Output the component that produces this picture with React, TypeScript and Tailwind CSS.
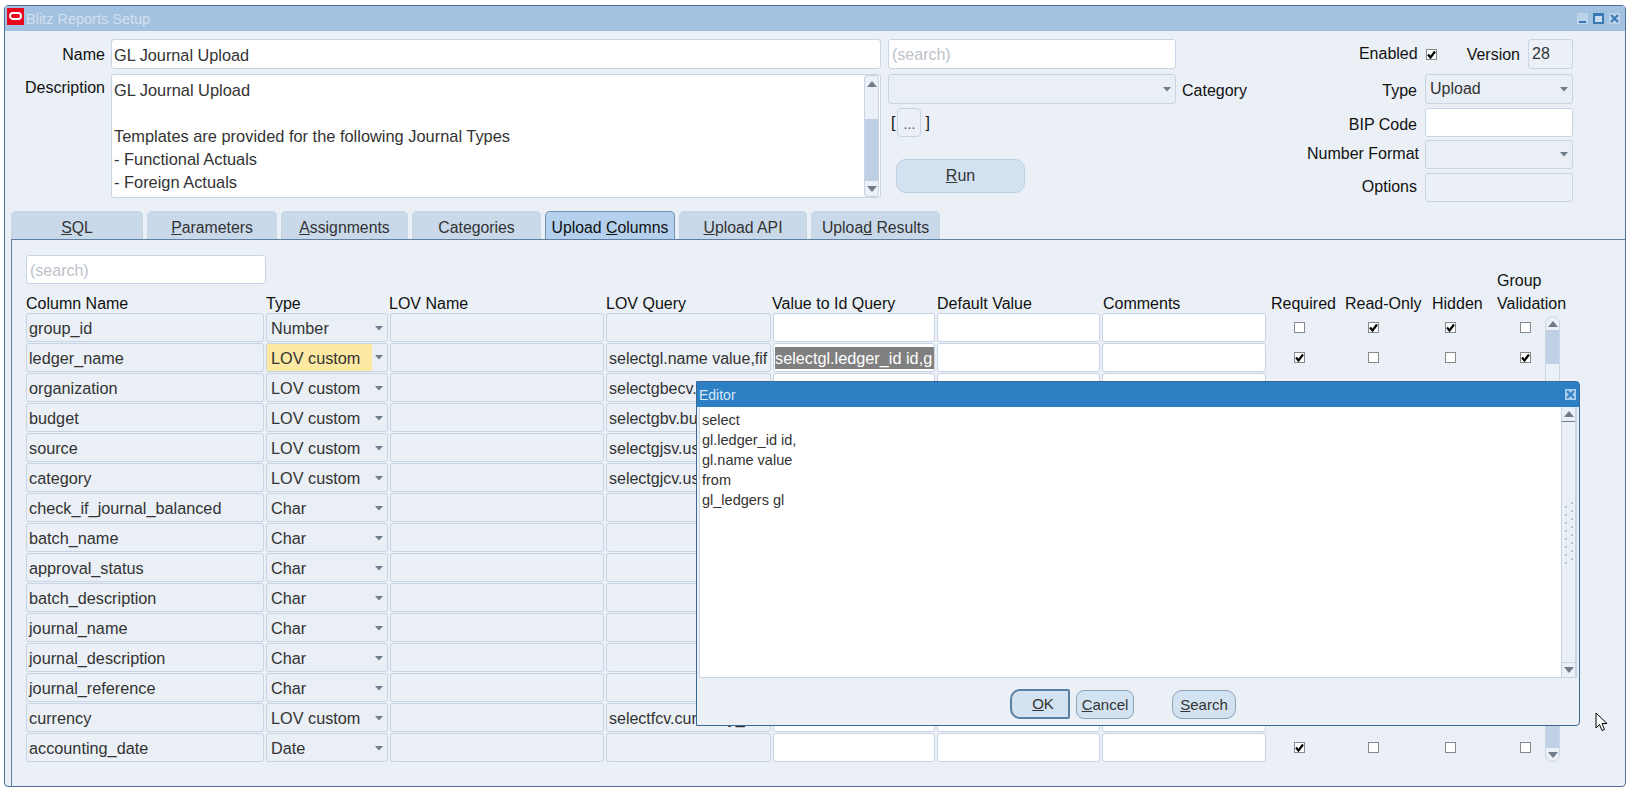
const rows = [
  { name: "group_id", type: "Number", query: "" },
  { name: "ledger_name", type: "LOV custom", query: "selectgl.name value,fif", active: true },
  { name: "organization", type: "LOV custom", query: "selectgbecv.name value" },
  { name: "budget", type: "LOV custom", query: "selectgbv.budget_name" },
  { name: "source", type: "LOV custom", query: "selectgjsv.user_je_sou" },
  { name: "category", type: "LOV custom", query: "selectgjcv.user_je_cat" },
  { name: "check_if_journal_balanced", type: "Char", query: "" },
  { name: "batch_name", type: "Char", query: "" },
  { name: "approval_status", type: "Char", query: "" },
  { name: "batch_description", type: "Char", query: "" },
  { name: "journal_name", type: "Char", query: "" },
  { name: "journal_description", type: "Char", query: "" },
  { name: "journal_reference", type: "Char", query: "" },
  { name: "currency", type: "LOV custom", query: "selectfcv.currency_code" },
  { name: "accounting_date", type: "Date", query: "" },
];

const flags = [
  [0, 1, 1, 0],
  [1, 0, 0, 1],
  [1, 0, 0, 0],
  [0, 0, 0, 0],
  [1, 0, 0, 0],
  [1, 0, 0, 0],
  [0, 0, 0, 0],
  [0, 0, 0, 0],
  [0, 0, 0, 0],
  [0, 0, 0, 0],
  [0, 0, 0, 0],
  [0, 0, 0, 0],
  [0, 0, 0, 0],
  [1, 0, 0, 0],
  [1, 0, 0, 0],
];

const tabs = [
  { pre: "", u: "S", post: "QL", w: "w-[132px]" },
  { pre: "", u: "P", post: "arameters", w: "w-[130px]" },
  { pre: "", u: "A", post: "ssignments", w: "w-[127px]" },
  { pre: "Categories", u: "", post: "", w: "w-[129px]" },
  { pre: "Upload ", u: "C", post: "olumns", w: "w-[130px]", active: true },
  { pre: "", u: "U", post: "pload API", w: "w-[128px]" },
  { pre: "Uploa", u: "d", post: " Results", w: "w-[129px]" },
];

function Check({ on }: { on?: boolean }) {
  return (
    <span className="flex h-[11px] w-[11px] items-center justify-center border border-[#85898e] bg-white">
      {on && (
        <svg width="9" height="9" viewBox="0 0 9 9">
          <path d="M1 4.5 L3.5 7.5 L8 1.5" fill="none" stroke="#000" strokeWidth="2.2" />
        </svg>
      )}
    </span>
  );
}

function Caret() {
  return (
    <svg width="8" height="5" viewBox="0 0 8 5" className="shrink-0">
      <path d="M0 0 H8 L4 4.5 Z" fill="#6f7c8a" />
    </svg>
  );
}

function Arrow({ down }: { down?: boolean }) {
  return (
    <svg width="10" height="6" viewBox="0 0 10 6">
      <path d={down ? "M0 0 H10 L5 6 Z" : "M0 6 H10 L5 0 Z"} fill="#6f7c8a" />
    </svg>
  );
}

function Select({ value, className }: { value?: string; className: string }) {
  return (
    <div className={`flex items-center justify-between rounded-[3px] border border-[#c6d4e3] bg-[#e9eff5] pl-[4px] pr-[4px] ${className}`}>
      <span>{value}</span>
      <Caret />
    </div>
  );
}

function App() {
  return (
    <div className="relative h-[792px] w-[1629px] overflow-hidden bg-white pl-[4px] pr-[3px] pt-[5px] font-['Liberation_Sans',Arial,sans-serif] text-[16px] text-[#333]">
      {/* main window */}
      <div className="flex h-[782px] flex-col rounded-[4px] border border-[#4f7196] bg-[#eaf0f6]">
        <div className="flex h-[25px] shrink-0 items-center bg-[#a3c1e0] pl-[2px] pr-[5px]">
          <svg width="17" height="17" viewBox="0 0 17 17" className="mt-[2px] shrink-0 self-start">
            <rect width="17" height="17" fill="#e8061f" />
            <rect x="3" y="5" width="11" height="6" rx="3" fill="none" stroke="#fff" strokeWidth="1.9" />
          </svg>
          <span className="ml-[2px] pt-[2px] text-[14.5px] text-[#d2e0ef]">Blitz Reports Setup</span>
          <div className="ml-auto flex gap-[5px]">
            <span className="flex h-[11px] w-[11px] items-end justify-center bg-[#bcd3ea] px-[2px] pb-[1px]">
              <span className="h-[2px] w-full bg-[#3a78b5]" />
            </span>
            <span className="h-[11px] w-[11px] border-2 border-t-[3px] border-[#3a78b5] bg-[#c9dcf0]" />
            <span className="flex h-[11px] w-[11px] items-center justify-center bg-[#bcd3ea]">
              <svg width="9" height="9" viewBox="0 0 9 9">
                <path d="M1 1 L8 8 M8 1 L1 8" stroke="#3a78b5" strokeWidth="2" />
              </svg>
            </span>
          </div>
        </div>

        {/* header form */}
        <div className="flex h-[180px] shrink-0">
          <div className="w-[876px] shrink-0 pt-[8px]">
            <div className="flex h-[30px] items-center">
              <span className="w-[100px] pt-[2px] text-right text-[#111]">Name</span>
              <div className="ml-[6px] flex h-full flex-1 items-center rounded-[3px] border border-[#c6d4e3] bg-white pl-[2px] pt-[2px] text-[16.3px]">GL Journal Upload</div>
            </div>
            <div className="mt-[5px] flex h-[124px]">
              <span className="mt-[2px] w-[100px] text-right leading-[23px] text-[#111]">Description</span>
              <div className="ml-[6px] flex flex-1 rounded-[3px] border border-[#c6d4e3] bg-white">
                <div className="flex-1 pl-[2px] pt-[4px] text-[16.4px] leading-[23px]">
                  <p>GL Journal Upload</p>
                  <p className="mt-[23px]">Templates are provided for the following Journal Types</p>
                  <p>- Functional Actuals</p>
                  <p>- Foreign Actuals</p>
                </div>
                <div className="mr-[1px] flex w-[15px] flex-col rounded-[3px] border border-[#c6d4e3] bg-[#eaf0f6]">
                  <div className="flex h-[15px] items-center justify-center"><Arrow /></div>
                  <div className="h-[28px]" />
                  <div className="flex-1 bg-[#bfd0e4]" />
                  <div className="flex h-[15px] items-center justify-center"><Arrow down /></div>
                </div>
              </div>
            </div>
          </div>

          <div className="ml-[7px] pt-[8px]">
            <div className="flex h-[30px] w-[288px] items-center rounded-[3px] border border-[#c6d4e3] bg-white pl-[3px] pt-[2px] text-[#bcc2c9]">(search)</div>
            <div className="mt-[5px] flex items-center">
              <Select className="h-[30px] w-[288px]" />
              <span className="ml-[6px] mt-[4px] text-[#111]">Category</span>
            </div>
            <div className="ml-[3px] mt-[4px] flex h-[29px] items-center">
              <span className="text-[#111]">[</span>
              <span className="ml-[2px] flex h-full w-[24px] items-end justify-center rounded-[4px] border border-[#c6d4e3] bg-[#eaf0f6] pb-[5px] text-[14px] leading-[14px] text-[#555]">...</span>
              <span className="ml-[4px] text-[#111]">]</span>
            </div>
            <div className="ml-[8px] mt-[22px] flex h-[34px] w-[129px] items-center justify-center rounded-[10px] border border-[#bccfe2] bg-[#d3e2f0]">
              <span><u>R</u>un</span>
            </div>
          </div>

          <div className="ml-auto mr-[52px] w-[330px] pt-[8px]">
            <div className="flex h-[30px] items-center justify-end">
              <span className="mt-[-1px] text-[#111]">Enabled</span>
              <span className="ml-[8px]"><Check on /></span>
              <span className="ml-[30px] mt-[1px] text-[#111]">Version</span>
              <div className="ml-[8px] flex h-full w-[45px] items-center rounded-[3px] border border-[#c6d4e3] pl-[3px]">28</div>
            </div>
            <div className="mt-[5px] flex items-center justify-end gap-[8px]">
              <span className="mt-[4px] text-[#111]">Type</span>
              <Select value="Upload" className="h-[30px] w-[148px] pl-[3px]" />
            </div>
            <div className="mt-[4px] flex items-center justify-end gap-[8px]">
              <span className="mt-[4px] text-[#111]">BIP Code</span>
              <div className="h-[29px] w-[148px] rounded-[3px] border border-[#c6d4e3] bg-white" />
            </div>
            <div className="mt-[3px] flex items-center justify-end gap-[6px]">
              <span className="mt-[-1px] text-[#111]">Number Format</span>
              <Select className="h-[29px] w-[148px]" />
            </div>
            <div className="mt-[4px] flex items-center justify-end gap-[8px]">
              <span className="mt-[-2px] text-[#111]">Options</span>
              <div className="h-[29px] w-[148px] rounded-[3px] border border-[#c6d4e3]" />
            </div>
          </div>
        </div>

        {/* tabs */}
        <div className="flex h-[28px] shrink-0 gap-[4px] pl-[6px] text-[15.8px]">
          {tabs.map((t, i) => (
            <div
              key={i}
              className={
                t.active
                  ? `flex ${t.w} items-center justify-center rounded-t-[5px] border border-b-0 border-[#6f93b8] bg-[#b4d0ec] pt-[4px] text-[#111]`
                  : `flex ${t.w} items-center justify-center rounded-t-[5px] border border-b-0 border-[#c6d4e3] bg-[#c9d9ea] pt-[4px]`
              }
            >
              <span>{t.pre}<u>{t.u}</u>{t.post}</span>
            </div>
          ))}
        </div>

        {/* tab panel */}
        <div className="ml-[6px] flex-1 border-l border-t border-[#5f80a3] pl-[14px] pt-[15px]">
          <div className="flex h-[29px] w-[240px] items-center rounded-[3px] border border-[#c6d4e3] bg-white pl-[3px] pt-[2px] text-[#bcc2c9]">(search)</div>

          <div className="flex h-[29px] items-end gap-[2px] leading-[18px] text-[#111]">
            <div className="w-[238px]">Column Name</div>
            <div className="w-[121px]">Type</div>
            <div className="w-[215px]">LOV Name</div>
            <div className="w-[164px]">LOV Query</div>
            <div className="w-[163px]">Value to Id Query</div>
            <div className="w-[164px]">Default Value</div>
            <div className="w-[163px]">Comments</div>
            <div className="ml-[3px] flex items-end">
              <div className="w-[74px]">Required</div>
              <div className="w-[87px]">Read-Only</div>
              <div className="w-[65px]">Hidden</div>
              <div className="mb-[-2px] w-[72px] whitespace-nowrap leading-[23px]">Group<br />Validation</div>
            </div>
          </div>

          <div className="flex">
            <div className="w-[1519px] shrink-0 text-[16.25px]">
              {rows.map((r, i) => (
                <div key={r.name} className="mb-[1px] flex h-[29px] gap-[2px]">
                  <div className="flex w-[238px] items-center rounded-[3px] border border-[#c6d4e3] pl-[2px] pt-[2px]">{r.name}</div>
                  {r.active ? (
                    <div className="flex w-[122px] items-center justify-between rounded-[3px] border border-[#c6d4e3] pr-[4px]">
                      <span className="flex h-full w-[105px] items-center bg-[#fde9a2] pl-[4px] pt-[2px]">{r.type}</span>
                      <Caret />
                    </div>
                  ) : (
                    <Select value={r.type} className="w-[122px] pt-[2px]" />
                  )}
                  <div className="w-[214px] rounded-[3px] border border-[#c6d4e3]" />
                  <div className="flex w-[165px] items-center overflow-hidden whitespace-nowrap rounded-[3px] border border-[#c6d4e3] pl-[2px] pt-[2px] text-[16px]">{r.query}</div>
                  <div className="flex w-[162px] items-center overflow-hidden whitespace-nowrap rounded-[3px] border border-[#c6d4e3] bg-white pl-[1px] pt-[1px]">
                    {r.active && <span className="flex h-[22px] w-[159px] items-center overflow-hidden bg-[#808080] text-white">selectgl.ledger_id id,g</span>}
                  </div>
                  <div className="w-[163px] rounded-[3px] border border-[#c6d4e3] bg-white" />
                  <div className="w-[164px] rounded-[3px] border border-[#c6d4e3] bg-white" />
                  <div className="ml-[3px] flex items-center">
                    <div className="w-[74px] pl-[23px]"><Check on={!!flags[i][0]} /></div>
                    <div className="w-[87px] pl-[23px]"><Check on={!!flags[i][1]} /></div>
                    <div className="w-[65px] pl-[13px]"><Check on={!!flags[i][2]} /></div>
                    <div className="w-[47px] pl-[23px]"><Check on={!!flags[i][3]} /></div>
                  </div>
                </div>
              ))}
            </div>
            <div className="mt-[3px] flex h-[446px] w-[15px] flex-col rounded-full border border-[#c6d4e3] bg-[#eaf0f6]">
              <div className="flex h-[13px] shrink-0 items-center justify-center"><Arrow /></div>
              <div className="h-[34px] shrink-0 bg-[#bfd0e4]" />
              <div className="flex-1" />
              <div className="h-[22px] shrink-0 bg-[#bfd0e4]" />
              <div className="flex h-[13px] shrink-0 items-center justify-center"><Arrow down /></div>
            </div>
          </div>
        </div>
      </div>

      {/* editor dialog */}
      <div className="absolute left-[696px] top-[381px] flex h-[345px] w-[884px] flex-col rounded-r-[4px] border border-[#3c6795] bg-[#eaf0f6]">
        <div className="flex h-[25px] shrink-0 items-center justify-between bg-[#2c7fc3] pl-[2px] pr-[3px]">
          <span className="pt-[1px] text-[14px] text-[#d9e9f8]">Editor</span>
          <span className="flex h-[11px] w-[11px] items-center justify-center bg-[#a9cdec]">
            <svg width="9" height="9" viewBox="0 0 9 9">
              <path d="M1 1 L8 8 M8 1 L1 8" stroke="#2c7fc3" strokeWidth="2" />
            </svg>
          </span>
        </div>
        <div className="ml-[2px] mr-[2px] flex h-[271px] shrink-0 border-x border-b border-[#c6d4e3] bg-white">
          <div className="flex-1 pl-[2px] pt-[3px] text-[14.5px] leading-[20px]">
            <p>select</p>
            <p>gl.ledger_id id,</p>
            <p>gl.name value</p>
            <p>from</p>
            <p>gl_ledgers gl</p>
          </div>
          <div className="flex w-[15px] flex-col border-x border-[#c6d4e3] bg-[#eaf0f6]">
            <div className="flex h-[15px] shrink-0 items-center justify-center border-b border-[#6f7c8a]"><Arrow /></div>
            <div className="mt-[80px] flex justify-center">
              <svg width="9" height="66" viewBox="0 0 9 66" stroke="#8b97a5">
                {Array.from({ length: 8 }, (_, k) => (
                  <path key={k} d={`M1 ${k * 8 + 6} l2 -2 M7 ${k * 8 + 2} l2 -2`} />
                ))}
              </svg>
            </div>
            <div className="flex-1" />
            <div className="flex h-[15px] shrink-0 items-center justify-center border-t border-[#c6d4e3]"><Arrow down /></div>
          </div>
        </div>
        <div className="flex flex-1 items-start pl-[313px] pt-[11px] text-[15px]">
          <div className="flex h-[30px] w-[60px] items-center justify-center rounded-l-[10px] rounded-r-[2px] border-2 border-[#5b7ea3] bg-[#d3e2f0] pl-[6px] pt-[1px]">
            <span><u>O</u>K</span>
          </div>
          <div className="ml-[6px] mt-[1px] flex h-[29px] w-[58px] items-center justify-center rounded-[8px] border border-[#8ca3bb] bg-[#d3e2f0] pt-[1px]">
            <span><u>C</u>ancel</span>
          </div>
          <div className="ml-[38px] mt-[1px] flex h-[29px] w-[64px] items-center justify-center rounded-[10px] border border-[#8ca3bb] bg-[#d3e2f0] pt-[1px]">
            <span><u>S</u>earch</span>
          </div>
        </div>
      </div>

      {/* mouse pointer */}
      <svg width="13" height="20" viewBox="0 0 13 20" className="absolute left-[1595px] top-[712px]">
        <path d="M1 1 V16 L4.5 12.5 L7 18.5 L9.5 17.5 L7 11.5 L12 11.5 Z" fill="#fff" stroke="#000" strokeWidth="1" />
      </svg>
    </div>
  );
}

export default App;
